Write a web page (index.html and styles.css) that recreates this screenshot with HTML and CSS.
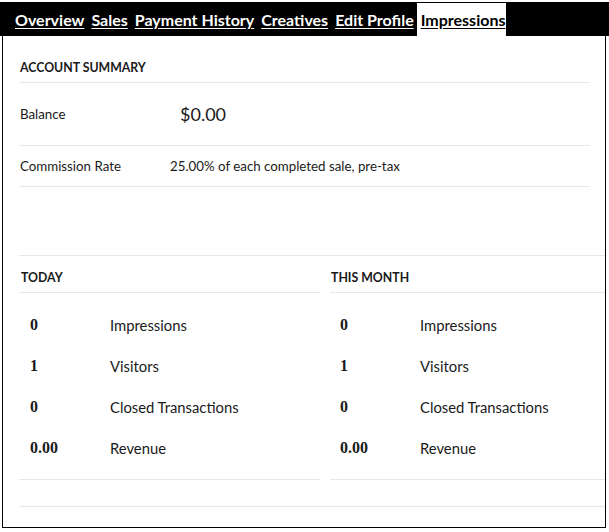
FILE: index.html
```html
<!DOCTYPE html>
<html lang="en">
<head>
<meta charset="utf-8">
<title>Affiliate Dashboard</title>
<link rel="stylesheet" href="styles.css">
</head>
<body>
<nav class="nav">
  <a class="tab" href="#">Overview</a>
  <a class="tab" href="#">Sales</a>
  <a class="tab" href="#">Payment History</a>
  <a class="tab" href="#">Creatives</a>
  <a class="tab" href="#">Edit Profile</a>
  <a class="tab active" href="#">Impressions</a>
</nav>
<main class="panel">
  <section class="summary">
    <h2 class="section-title">Account Summary</h2>
    <div class="summary-row balance-row">
      <span class="summary-label">Balance</span>
      <span class="balance-value">$0.00</span>
    </div>
    <div class="summary-row rate-row">
      <span class="summary-label">Commission Rate</span>
      <span class="rate-value">25.00% of each completed sale, pre-tax</span>
    </div>
  </section>
  <section class="stats">
    <div class="stat-col">
      <h2 class="col-title">Today</h2>
      <ul class="stat-list">
        <li class="stat"><span class="stat-num">0</span><span class="stat-label">Impressions</span></li>
        <li class="stat"><span class="stat-num">1</span><span class="stat-label">Visitors</span></li>
        <li class="stat"><span class="stat-num">0</span><span class="stat-label">Closed Transactions</span></li>
        <li class="stat"><span class="stat-num">0.00</span><span class="stat-label">Revenue</span></li>
      </ul>
    </div>
    <div class="stat-col">
      <h2 class="col-title">This Month</h2>
      <ul class="stat-list">
        <li class="stat"><span class="stat-num">0</span><span class="stat-label">Impressions</span></li>
        <li class="stat"><span class="stat-num">1</span><span class="stat-label">Visitors</span></li>
        <li class="stat"><span class="stat-num">0</span><span class="stat-label">Closed Transactions</span></li>
        <li class="stat"><span class="stat-num">0.00</span><span class="stat-label">Revenue</span></li>
      </ul>
    </div>
  </section>
</main>
</body>
</html>
```
FILE: styles.css
```css
* { box-sizing: border-box; }

body {
  margin: 0;
  background: #fff;
  color: #1a1a1a;
  font-family: "Lato", "Noto Sans", sans-serif;
}

.nav {
  margin-top: 2px;
  height: 34px;
  background: #000;
  display: flex;
  gap: 2px;
  padding: 1px 0 0 11px;
}

.tab {
  display: flex;
  align-items: center;
  padding: 0 1px 0 4px;
  color: #fff;
  font-size: 16px;
  font-weight: 700;
  text-decoration: underline;
  text-underline-offset: 2px;
}

.tab.active {
  background: #fff;
  color: #000;
}

.panel {
  margin: 0 3px 0 2px;
  height: 492px;
  border: 1px solid #000;
  border-top: none;
  padding: 16px 0 0 16px;
}

.summary {
  margin-right: 15px;
}

.section-title,
.col-title {
  margin: 0;
  font-size: 12.3px;
  font-weight: 700;
  text-transform: uppercase;
}

.section-title {
  height: 31px;
  padding: 2px 0 0 1px;
  line-height: 28px;
  border-bottom: 1px solid #e8e8e8;
}

.summary-row {
  display: flex;
  align-items: center;
  border-bottom: 1px solid #e8e8e8;
  font-size: 13.3px;
}

.summary-label {
  padding-left: 1px;
}

.balance-row {
  height: 63px;
}

.balance-row .summary-label {
  width: 161px;
}

.balance-value {
  font-size: 18px;
}

.rate-row {
  height: 41px;
}

.rate-row .summary-label {
  width: 151px;
}

.stats {
  margin-top: 68px;
  border-top: 1px solid #e8e8e8;
  border-bottom: 1px solid #e8e8e8;
  display: grid;
  grid-template-columns: 301px 1fr;
  column-gap: 10px;
  padding-bottom: 26px;
}

.col-title {
  height: 37px;
  padding: 8px 0 0 2px;
  line-height: 28px;
  border-bottom: 1px solid #e8e8e8;
}

.stat-col + .stat-col .col-title {
  padding-left: 1px;
}

.stat-list {
  list-style: none;
  margin: 0;
  padding: 11px 0 11px;
  border-bottom: 1px solid #e8e8e8;
}

.stat {
  display: flex;
  height: 41px;
  align-items: center;
  font-size: 14.8px;
}

.stat-num {
  width: 91px;
  padding-left: 11px;
  font-family: "Liberation Serif", serif;
  font-weight: 700;
  font-size: 16px;
}

.stat-col + .stat-col .stat-num {
  width: 90px;
  padding-left: 10px;
}
```
